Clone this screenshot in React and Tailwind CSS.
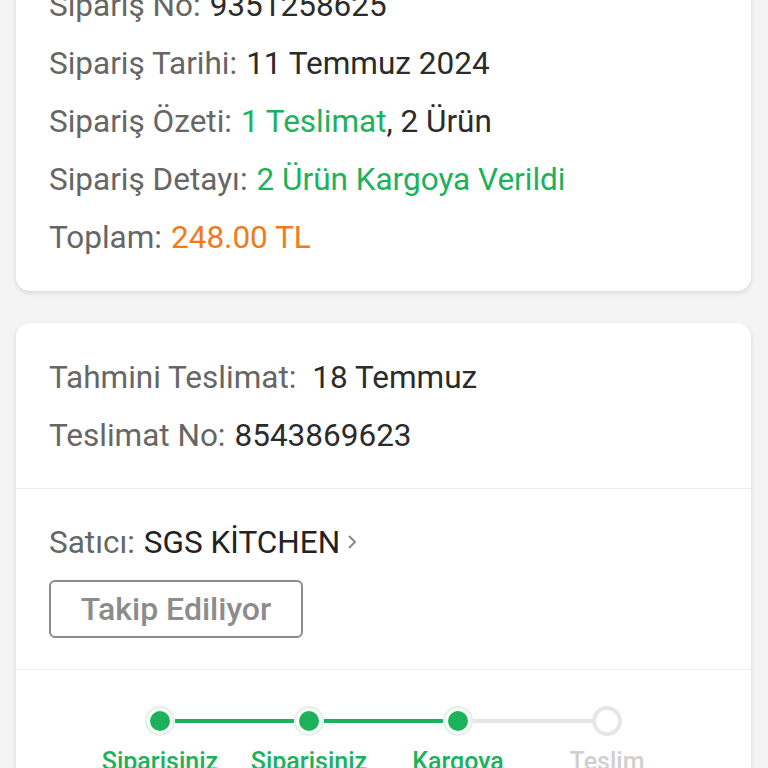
import React from "react";

const Row = ({ label, children }) => (
  <div className="h-[58px] flex items-center whitespace-nowrap">
    <span className="text-[#666666]">{label}</span>
    <span className="ml-[9px] text-[#2b2b2b]">{children}</span>
  </div>
);

const steps = [
  { label: "Siparişiniz", done: true, left: null, right: "green" },
  { label: "Siparişiniz", done: true, left: "green", right: "green" },
  { label: "Kargoya", done: true, left: "green", right: "gray" },
  { label: "Teslim", done: false, left: "gray", right: null },
];

const lineClass = (c) =>
  c === "green"
    ? "flex-1 h-[4px] bg-[#1cb25b]"
    : c === "gray"
    ? "flex-1 h-[4px] bg-[#e6e6e6]"
    : "flex-1 h-[4px]";

const App = () => {
  return (
    <div
      className="min-h-screen bg-[#f4f4f4] px-[16px] pr-[17px] overflow-hidden text-[31.5px]"
      style={{ fontFamily: "Roboto, 'Liberation Sans', sans-serif" }}
    >
      {/* Sipariş bilgileri */}
      <div className="-mt-[49px] bg-white rounded-[14px] shadow-[0_2px_5px_rgba(0,0,0,0.12)] pt-[26px] pb-[24px] px-[33px]">
        <Row label="Sipariş No:">9351258625</Row>
        <Row label="Sipariş Tarihi:">11 Temmuz 2024</Row>
        <Row label="Sipariş Özeti:">
          <span className="text-[#1cb25b]">1 Teslimat</span>, 2 Ürün
        </Row>
        <Row label="Sipariş Detayı:">
          <span className="text-[#1cb25b]">2 Ürün Kargoya Verildi</span>
        </Row>
        <Row label="Toplam:">
          <span className="text-[#f27a1a]">248.00 TL</span>
        </Row>
      </div>

      {/* Teslimat kartı */}
      <div className="mt-[32px] bg-white rounded-[14px] shadow-[0_2px_5px_rgba(0,0,0,0.12)]">
        <div className="pt-[26px] pb-[23px] px-[33px] border-b border-[#ececec]">
          <Row label="Tahmini Teslimat:">
            <span className="ml-[7px]">18 Temmuz</span>
          </Row>
          <Row label="Teslimat No:">8543869623</Row>
        </div>

        <div className="pt-[25px] pb-[31px] px-[33px] border-b border-[#ececec]">
          <div className="h-[58px] flex items-center whitespace-nowrap">
            <span className="text-[#666666]">Satıcı:</span>
            <span className="ml-[9px] text-[#222222]">SGS KİTCHEN</span>
            <svg width="12" height="20" viewBox="0 0 12 20" className="ml-[6px] mt-[-2px]">
              <path d="M3 4 L9 10 L3 16" fill="none" stroke="#8a8a8a" strokeWidth="2" />
            </svg>
          </div>
          <button className="mt-[8px] h-[58px] w-[254px] border-2 border-[#8c8c8c] rounded-[6px] text-[#8c8c8c] font-medium text-[32px]">
            Takip Ediliyor
          </button>
        </div>

        <div className="pt-[36px] pb-[20px]">
          <div className="w-[596px] mx-auto grid grid-cols-4">
            {steps.map((s, i) => (
              <div key={i} className="flex flex-col items-center">
                <div className="w-full flex items-center">
                  <div className={lineClass(s.left)} />
                  {s.done ? (
                    <div className="w-[30px] h-[30px] rounded-full border-2 border-[#dcf3e5] bg-white flex items-center justify-center">
                      <div className="w-[20px] h-[20px] rounded-full bg-[#1cb25b]" />
                    </div>
                  ) : (
                    <div className="w-[30px] h-[30px] rounded-full border-[4px] border-[#e6e6e6] bg-white" />
                  )}
                  <div className={lineClass(s.right)} />
                </div>
                <div
                  className={
                    "mt-[11px] text-[25px] leading-[30px] font-medium " +
                    (s.done ? "text-[#1cb25b]" : "text-[#d0d0d0]")
                  }
                >
                  {s.label}
                </div>
              </div>
            ))}
          </div>
        </div>
      </div>
    </div>
  );
};

export default App;
